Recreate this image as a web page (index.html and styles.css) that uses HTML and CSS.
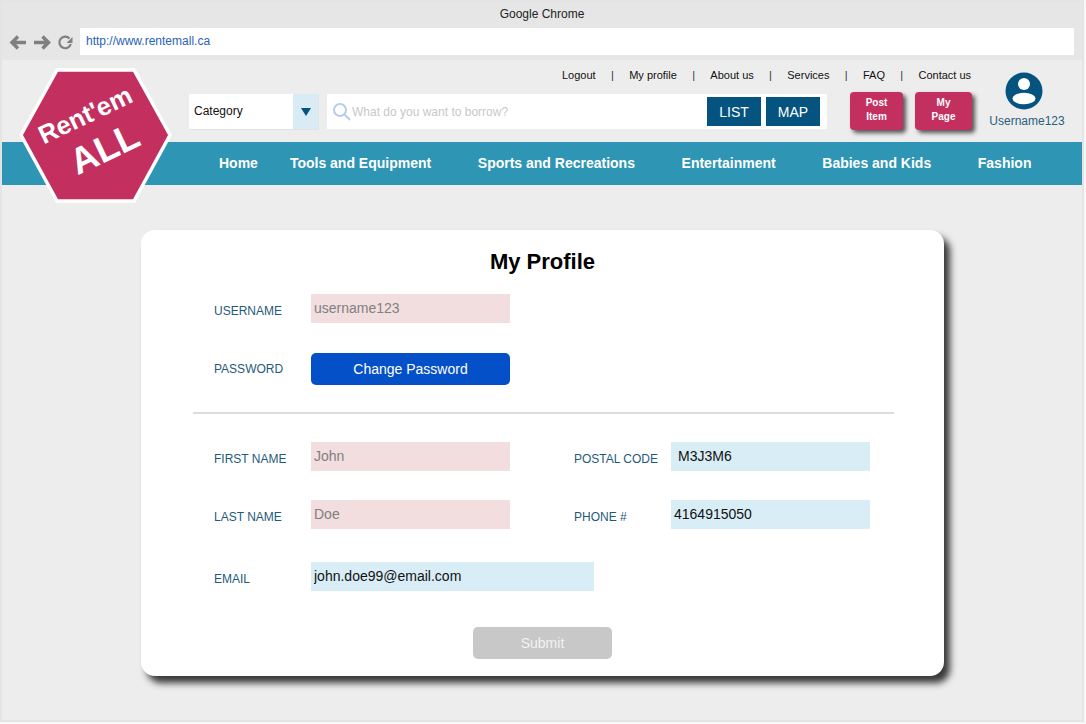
FILE: index.html
```html
<!DOCTYPE html>
<html lang="en">

<head>
    <meta charset="UTF-8">
    <meta name="viewport" content="width=device-width, initial-scale=1.0">
    <title>My Profile</title>
    <link rel="stylesheet" href="styles.css">
</head>

<body>

    <div class="window">
        <div class="browser-bar">
            <div class="browser-title">Google Chrome</div>
            <div class="browser-tools">
                <svg class="browser-icons" width="66" height="20" viewBox="0 0 66 20">
                    <path d="M18 10.500H4M10 4.500l-6 6 6 6" fill="none" stroke="#808080" stroke-width="3.500" />
                    <path d="M26 10.500h14M34.500 4.500l6 6-6 6" fill="none" stroke="#808080" stroke-width="3.500" />
                    <path d="M61.500 6.500A5.800 5.800 0 1 0 62.800 12" fill="none" stroke="#808080" stroke-width="2.200" />
                    <path d="M64.500 5v6h-6z" fill="#808080" />
                </svg>
                <div class="url-box">http://www.rentemall.ca</div>
            </div>
        </div>

        <header class="site-header">
            <svg class="logo" width="156" height="139" viewBox="0 0 156 139">
                <polygon points="39,3 116,3 152,68 116,134 39,134 3,68" fill="#c3305f" stroke="#fff" stroke-width="3.500" />
                <text class="logo-small" x="71" y="56" text-anchor="middle" transform="rotate(-25.500 71 56)">Rent'em</text>
                <text class="logo-big" x="92" y="93" text-anchor="middle" transform="rotate(-25.500 92 93)">ALL</text>
            </svg>

            <nav class="top-links">
                <a>Logout</a><span>|</span>
                <a>My profile</a><span>|</span>
                <a>About us</a><span>|</span>
                <a>Services</a><span>|</span>
                <a>FAQ</a><span>|</span>
                <a>Contact us</a>
            </nav>

            <div class="tool-row">
                <div class="category">
                    <span class="category-name">Category</span>
                    <span class="category-arrow"><i></i></span>
                </div>
                <div class="search">
                    <svg width="20" height="20" viewBox="0 0 20 20">
                        <circle cx="8" cy="8" r="6" fill="none" stroke="#b5cdea" stroke-width="2" />
                        <path d="M12.500 12.500L18 18" stroke="#b5cdea" stroke-width="2" />
                    </svg>
                    <span class="search-text">What do you want to borrow?</span>
                    <button class="view-btn">LIST</button>
                    <button class="view-btn">MAP</button>
                </div>
                <button class="action-btn action-post">Post<br>Item</button>
                <button class="action-btn action-page">My<br>Page</button>
                <div class="user">
                    <svg width="38" height="38" viewBox="0 0 38 38">
                        <circle cx="19" cy="19" r="18.500" fill="#055480" />
                        <circle cx="19" cy="12" r="6" fill="#fff" />
                        <ellipse cx="19" cy="26.500" rx="11.500" ry="5.800" fill="#fff" />
                    </svg>
                    <span>Username123</span>
                </div>
            </div>
        </header>

        <nav class="main-nav">
            <a class="nav-home">Home</a>
            <a>Tools and Equipment</a>
            <a>Sports and Recreations</a>
            <a>Entertainment</a>
            <a>Babies and Kids</a>
            <a>Fashion</a>
        </nav>

        <main class="content">
            <form class="card">
                <h1>My Profile</h1>

                <div class="field-row">
                    <label class="label">USERNAME</label>
                    <input class="input input-locked" type="text" value="username123" readonly>
                </div>
                <div class="field-row row-password">
                    <label class="label label-password">PASSWORD</label>
                    <button type="button" class="password-btn">Change Password</button>
                </div>

                <hr class="divider">

                <div class="field-row row-first">
                    <label class="label">FIRST NAME</label>
                    <input class="input input-locked" type="text" value="John" readonly>
                    <label class="label label-right">POSTAL CODE</label>
                    <input class="input input-edit input-postal" type="text" value="M3J3M6">
                </div>
                <div class="field-row row-last">
                    <label class="label">LAST NAME</label>
                    <input class="input input-locked" type="text" value="Doe" readonly>
                    <label class="label label-right">PHONE #</label>
                    <input class="input input-edit" type="text" value="4164915050">
                </div>
                <div class="field-row row-email">
                    <label class="label">EMAIL</label>
                    <input class="input input-edit input-email" type="text" value="john.doe99@email.com">
                </div>

                <button type="button" class="submit-btn">Submit</button>
            </form>
        </main>
    </div>

</body>

</html>
```

FILE: styles.css
```css
body {
    font-family: 'Liberation Sans', Arial, sans-serif;
    background-color: #f7f7f7;
    margin: 0;
    padding: 0;
}

.window {
    position: relative;
    width: 1080px;
    height: 718px;
    border: 2px solid #e4e4e4;
    background-color: #ededed;
    overflow: hidden;
}

/* fake browser chrome */
.browser-bar {
    height: 58px;
    background-color: #e6e6e6;
}

.browser-title {
    font-size: 12px;
    line-height: 14px;
    padding-top: 5px;
    text-align: center;
    color: #222;
    height: 21px;
}

.browser-tools {
    display: flex;
    align-items: center;
    height: 27px;
}

.browser-icons {
    margin-left: 6px;
    margin-right: 6px;
    flex: none;
}

.url-box {
    width: 988px;
    height: 27px;
    line-height: 27px;
    padding-left: 6px;
    background-color: #fff;
    font-size: 12px;
    color: #2a62b8;
}

/* site header */
.site-header {
    height: 82px;
}

.logo {
    position: absolute;
    left: 16px;
    top: 65px;
    z-index: 2;
}

.logo-small {
    font-size: 25.700px;
    font-weight: bold;
    fill: #fff;
}

.logo-big {
    font-size: 37px;
    font-weight: bold;
    fill: #fff;
}

.top-links {
    display: flex;
    height: 34px;
    padding-left: 560px;
    padding-top: 8px;
    box-sizing: border-box;
    font-size: 11px;
    line-height: 14px;
    color: #111;
}

.top-links span {
    width: 33.500px;
    text-align: center;
    color: #333;
}

.tool-row {
    display: flex;
    align-items: flex-start;
    padding-left: 187px;
}

.category {
    display: flex;
    width: 129px;
    height: 35px;
    background-color: #fff;
    box-shadow: 1px 1px 0 #e2e2e2;
}

.category-name {
    flex: 1;
    padding-left: 5px;
    font-size: 12px;
    line-height: 35px;
    color: #111;
}

.category-arrow {
    display: flex;
    align-items: center;
    justify-content: center;
    width: 25px;
    background-color: #d9ebf5;
}

.category-arrow i {
    width: 0;
    height: 0;
    border-left: 5px solid transparent;
    border-right: 5px solid transparent;
    border-top: 8px solid #055480;
}

.search {
    display: flex;
    align-items: center;
    width: 500px;
    height: 35px;
    margin-left: 9px;
    padding: 0 7px 0 5px;
    box-sizing: border-box;
    background-color: #fff;
}

.search svg {
    flex: none;
}

.search-text {
    flex: 1;
    font-size: 12px;
    color: #c8c8c8;
}

.view-btn {
    width: 54px;
    height: 29px;
    margin-left: 5px;
    padding: 0;
    border: none;
    background-color: #055480;
    color: #fff;
    font-family: inherit;
    font-size: 14px;
}

.action-btn {
    height: 38px;
    margin-top: -2px;
    padding: 0 0 3px;
    border: none;
    border-radius: 4px;
    background-color: #c3305f;
    color: #fff;
    font-family: inherit;
    font-size: 10px;
    font-weight: bold;
    line-height: 14px;
    box-shadow: 3px 3px 4px #555;
}

.action-post {
    width: 53px;
    margin-left: 23px;
}

.action-page {
    width: 57px;
    margin-left: 12px;
}

.user {
    display: flex;
    flex-direction: column;
    align-items: center;
    width: 80px;
    margin-left: 15px;
    margin-top: -22px;
    font-size: 12px;
    line-height: 14px;
    color: #27607d;
}

.user svg {
    margin-left: -6px;
    margin-bottom: 4px;
}

/* main menu */
.main-nav {
    display: flex;
    height: 43px;
    padding-left: 217px;
    background-color: #2e95b5;
    font-size: 14px;
    font-weight: bold;
    line-height: 43px;
    color: #fff;
    gap: 46.600px;
}

.nav-home {
    margin-right: -14.600px;
}

/* profile form */
.content {
    padding: 45px 0 0 139px;
}

.card {
    width: 803px;
    height: 446px;
    padding: 0 49px 0 73px;
    box-sizing: border-box;
    background-color: #fff;
    border-radius: 14px;
    box-shadow: 6px 7px 7px #383838;
}

h1 {
    margin: 0 -49px 17px -73px;
    padding-top: 18px;
    height: 47px;
    box-sizing: border-box;
    font-size: 22px;
    line-height: 28px;
    text-align: center;
    color: #000;
}

.field-row {
    display: flex;
    height: 29px;
    margin-bottom: 30px;
}

.label {
    width: 97px;
    flex: none;
    padding-top: 10px;
    font-size: 12px;
    line-height: 14px;
    color: #1f5a7a;
}

.label-password {
    padding-top: 9px;
}

.label-right {
    margin-left: 64px;
}

.input {
    width: 199px;
    height: 29px;
    padding: 0 0 2px 3px;
    box-sizing: border-box;
    border: none;
    outline: none;
    font-family: inherit;
    font-size: 14px;
    color: #111;
}

.input-locked {
    background-color: #f2dede;
    color: #808080;
}

.input-edit {
    background-color: #d9edf7;
}

.input-postal {
    padding-left: 7px;
}

.input-email {
    width: 283px;
}

.row-password {
    height: 32px;
    margin-bottom: 27px;
}

.password-btn {
    width: 199px;
    height: 32px;
    padding: 0;
    border: none;
    border-radius: 5px;
    background-color: #0450c8;
    color: #fff;
    font-family: inherit;
    font-size: 14px;
}

.divider {
    margin: 0 0 28px -21px;
    width: 701px;
    height: 2px;
    border: none;
    background-color: #dcdcdc;
}

.row-first {
    margin-bottom: 29px;
}

.row-last {
    margin-bottom: 33px;
}

.row-email {
    margin-bottom: 36px;
}

.submit-btn {
    display: block;
    width: 139px;
    height: 32px;
    margin-left: 259px;
    padding: 0;
    border: none;
    border-radius: 5px;
    background-color: #c8c8c8;
    color: #f2f2f2;
    font-family: inherit;
    font-size: 14px;
}
```
